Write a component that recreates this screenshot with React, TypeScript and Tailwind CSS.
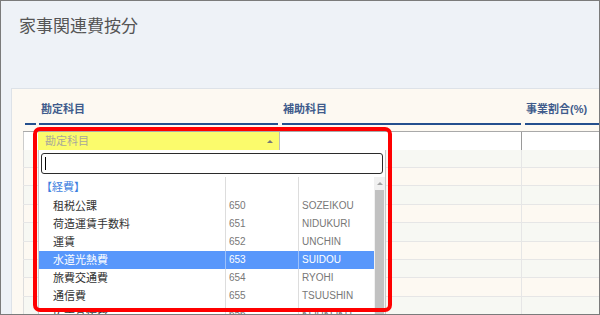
import React from "react";

const items = [
  { name: "租税公課", code: "650", kana: "SOZEIKOU" },
  { name: "荷造運賃手数料", code: "651", kana: "NIDUKURI" },
  { name: "運賃", code: "652", kana: "UNCHIN" },
  { name: "水道光熱費", code: "653", kana: "SUIDOU", sel: true },
  { name: "旅費交通費", code: "654", kana: "RYOHI" },
  { name: "通信費", code: "655", kana: "TSUUSHIN" },
  { name: "広告宣伝費", code: "656", kana: "KOUKOKU" },
];

const rowHeights = [18, 18, 19, 18, 19, 18, 18, 19, 18];

export default function App() {
  return (
    <div
      className="w-[600px] h-[315px] border border-[#7b7b7b] bg-[#eef2f7] overflow-hidden box-border"
      style={{ fontFamily: '"Liberation Sans", "Noto Sans CJK JP", sans-serif' }}
    >
      <div className="relative w-full h-full flex flex-col">
        <div className="h-[87px] pl-[18px] pt-[14px] shrink-0">
          <div className="text-[17px] leading-[24px] text-[#555555]">家事関連費按分</div>
        </div>
        <div className="ml-[10px] flex-1 bg-[#fdf9f2] border-t border-l border-[#dde2e8]">
          {/* header labels */}
          <div className="flex pl-[13px] pt-[13px]">
            <div className="w-[11px] mr-[3px]" />
            <div className="w-[239px] mr-[4px] pl-[2px] text-[11px] leading-[14px] font-bold text-[#3f5b8c]">勘定科目</div>
            <div className="w-[239px] mr-[4px] pl-[1px] text-[11px] leading-[14px] font-bold text-[#3f5b8c]">補助科目</div>
            <div className="flex-1 pl-[1px] text-[11px] leading-[14px] font-bold text-[#3f5b8c]">事業割合(%)</div>
          </div>
          <div className="flex pl-[13px] mt-[7px]">
            <div className="w-[11px] mr-[3px] h-[2px] bg-[#244f8e]" />
            <div className="w-[239px] mr-[4px] h-[2px] bg-[#244f8e]" />
            <div className="w-[239px] mr-[4px] h-[2px] bg-[#244f8e]" />
            <div className="flex-1 h-[2px] bg-[#244f8e]" />
          </div>
          {/* table */}
          <div className="ml-[11px] mt-[6px]">
            <div className="flex h-[19px] border-t border-[#a9a9a9] bg-white box-border">
              <div className="w-[15px] border-l border-[#cccccc]" />
              <div className="w-[242px] bg-[#fbfb6c] border-r border-[#bbbbbb] flex items-center justify-between pl-[7px] pr-[6px]">
                <span className="text-[11px] text-[#a9a99a] leading-[14px]">勘定科目</span>
                <span className="w-0 h-0 border-l-[3px] border-r-[3px] border-b-[3px] border-l-transparent border-r-transparent border-b-[#777777]" />
              </div>
              <div className="w-[242px] border-r border-[#9a9a9a]" />
              <div className="flex-1" />
            </div>
            {rowHeights.map((h, i) => (
              <div
                key={i}
                className={`flex border-b border-[#e6e6e6] box-border ${i % 2 === 0 ? "bg-[#f7f8f3]" : "bg-[#fdf9f2]"}`}
                style={{ height: h }}
              >
                <div className="w-[15px] border-l border-[#dddddd]" />
                <div className="w-[242px]" />
                <div className="w-[242px] border-r border-[#e6e6e6]" />
                <div className="flex-1" />
              </div>
            ))}
          </div>
        </div>

        {/* dropdown */}
        <div className="absolute left-[37px] top-[149px] w-[348px] h-[175px] bg-white border-x border-[#c8c8c8] box-border flex flex-col">
          <div className="mx-[2px] mt-[3px] h-[21px] border-[1.5px] border-[#2b2b2b] rounded-[3px] flex items-center pl-[3px] box-border">
            <div className="w-[1px] h-[13px] bg-black" />
          </div>
          <div className="flex mt-[3px] flex-1">
            <div className="w-[335px]">
              <div className="flex h-[20px]">
                <div className="w-[186px] pl-[2px] text-[11px] leading-[20px] text-[#3d7fe0]">【経費】</div>
                <div className="w-[73px] border-l border-[#dddddd]" />
                <div className="flex-1 border-l border-[#dddddd]" />
              </div>
              {items.map((it) => (
                <div key={it.code} className={`flex h-[18px] ${it.sel ? "bg-[#5897fb]" : ""}`}>
                  <div className={`w-[186px] pl-[14px] text-[11px] leading-[18px] ${it.sel ? "text-white" : "text-[#333333]"}`}>
                    {it.name}
                  </div>
                  <div
                    className={`w-[73px] pl-[3px] text-[10px] leading-[18px] border-l ${
                      it.sel ? "border-[#9cc1fb] text-white" : "border-[#dddddd] text-[#777777]"
                    }`}
                  >
                    {it.code}
                  </div>
                  <div
                    className={`flex-1 pl-[3px] text-[10px] leading-[18px] border-l ${
                      it.sel ? "border-[#9cc1fb] text-white" : "border-[#dddddd] text-[#777777]"
                    }`}
                  >
                    {it.kana}
                  </div>
                </div>
              ))}
            </div>
            <div className="w-[11px] bg-[#f1f1f1] flex flex-col">
              <div className="h-[13px] flex items-center justify-center">
                <span className="w-0 h-0 border-l-[3px] border-r-[3px] border-b-[3px] border-l-transparent border-r-transparent border-b-[#a3a3a3]" />
              </div>
              <div className="mx-[1px] flex-1 bg-[#c1c1c1]" />
            </div>
          </div>
        </div>

        {/* red highlight */}
        <div className="absolute left-[32px] top-[126px] w-[359px] h-[185px] border-[4px] border-[#ff0000] rounded-[7px] box-border" />
      </div>
    </div>
  );
}
